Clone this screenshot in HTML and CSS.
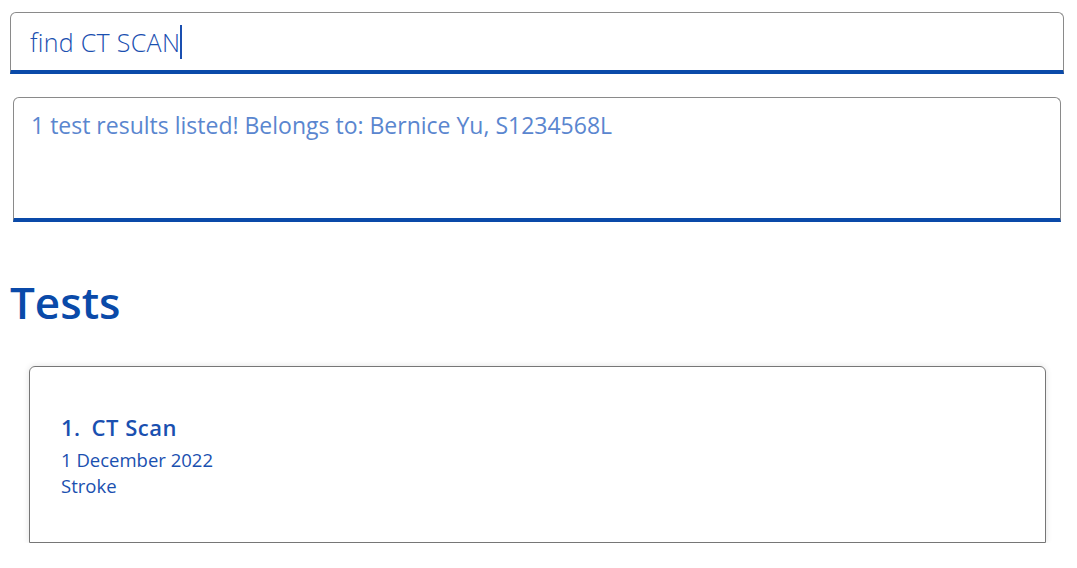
FILE: index.html
```html
<!DOCTYPE html>
<html>
<head>
<meta charset="utf-8">
<link rel="stylesheet" href="styles.css">
</head>
<body>
<div class="app">
  <div class="command">
    <span class="command-text">find CT SCAN</span><span class="caret"></span>
  </div>
  <div class="result">1 test results listed! Belongs to: Bernice Yu, S1234568L</div>
  <h1 class="title">Tests</h1>
  <div class="card">
    <div class="card-title"><span class="index">1.</span>CT Scan</div>
    <div class="card-line">1 December 2022</div>
    <div class="card-line">Stroke</div>
  </div>
</div>
</body>
</html>
```

FILE: styles.css
```css
* { box-sizing: border-box; }
html, body { margin: 0; padding: 0; background: #fff; }
body { font-family: "Open Sans", "Noto Sans", sans-serif; }
.app { padding: 12px 13px 0 10px; }
.command {
  height: 62px;
  border: 1px solid #8a8a8a;
  border-bottom: 4px solid #0a4aa9;
  border-radius: 6px 6px 0 0;
  display: flex;
  align-items: center;
  padding: 0 0 0 19px;
  margin-bottom: 23px;
}
.command-text { font-size: 25px; font-weight: 300; color: #1a4fb0; letter-spacing: 0.3px; }
.caret { display: inline-block; width: 2px; height: 34px; background: #1a4fb0; margin-left: 0; }
.result {
  margin: 0 3px 0 3px;
  height: 125px;
  border: 1px solid #8a8a8a;
  border-bottom: 4px solid #0a4aa9;
  border-radius: 6px 6px 0 0;
  padding: 11px 0 0 17px;
  font-size: 23px;
  color: #5a86cf;
}
.title {
  margin: 50px 0 0 0;
  font-size: 44px;
  font-weight: 600;
  color: #0a4aa9;
  line-height: 60px;
}
.card {
  margin: 34px 18px 0 19px;
  height: 177px;
  border: 1px solid #767676;
  border-radius: 6px 6px 0 0;
  box-shadow: 0 0 6px rgba(0,0,0,0.12);
  padding: 46px 0 0 31px;
  color: #1a50b0;
}
.card-title { font-size: 22px; font-weight: 600; line-height: 28px; margin-bottom: 6px; letter-spacing: 0.5px; }
.index { margin-right: 11px; }
.card-line { font-size: 18.5px; line-height: 26px; }
```
